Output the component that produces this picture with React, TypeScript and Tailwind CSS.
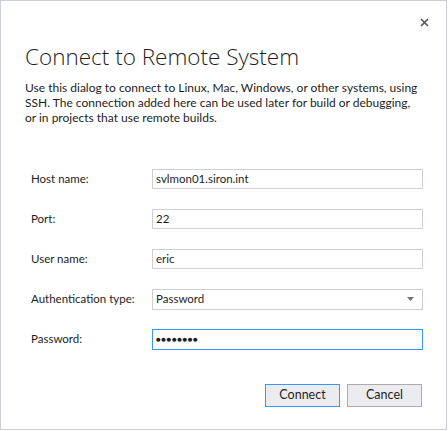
import React from 'react';

const fields = [
  { label: 'Host name:', value: 'svlmon01.siron.int' },
  { label: 'Port:', value: '22' },
  { label: 'User name:', value: 'eric' },
];

export default function App() {
  return (
    <div className="w-[448px] h-[431px] bg-white" style={{ fontFamily: 'Lato, "Noto Sans", sans-serif' }}>
      <div className="relative w-[447px] h-[430px] border border-[#cccedb] bg-white text-[#1e1e1e]">
        {/* Close */}
        <button className="absolute top-[15px] right-[16px] w-[12px] h-[12px] flex items-center justify-center">
          <svg width="9" height="9" viewBox="0 0 9 9">
            <path d="M1 1 L8 8 M8 1 L1 8" stroke="#555" strokeWidth="1.6" />
          </svg>
        </button>

        <div className="pl-[24px] pr-[10px] pt-[41px]">
          <h1 className="text-[22.5px] font-light leading-[30px] whitespace-nowrap" style={{ fontFamily: '"Open Sans", sans-serif' }}>
            Connect to Remote System
          </h1>
          <p className="mt-[8px] text-[12px] leading-[15px] whitespace-nowrap">
            Use this dialog to connect to Linux, Mac, Windows, or other systems, using
            <br />
            SSH. The connection added here can be used later for build or debugging,
            <br />
            or in projects that use remote builds.
          </p>
        </div>

        {/* Form */}
        <div className="mt-[44px] flex flex-col gap-[20px] pl-[30px]">
          {fields.map((f) => (
            <div key={f.label} className="flex items-center h-[20px]">
              <span className="w-[121px] text-[11.5px]">{f.label}</span>
              <div className="w-[271px] h-[20px] border border-[#cccedb] flex items-center px-[3px] text-[11.5px]">
                {f.value}
              </div>
            </div>
          ))}
          <div className="flex items-center h-[20px]">
            <span className="w-[121px] text-[11.5px]">Authentication type:</span>
            <div className="w-[271px] h-[21px] border border-[#cccedb] flex items-center justify-between px-[3px] text-[11.5px]">
              <span>Password</span>
              <svg width="7" height="4" viewBox="0 0 7 4" className="mr-[5px]">
                <path d="M0 0 H7 L3.5 4 Z" fill="#717171" />
              </svg>
            </div>
          </div>
          <div className="flex items-center h-[20px]">
            <span className="w-[121px] text-[11.5px]">Password:</span>
            <div className="w-[271px] h-[21px] border border-[#3399ff] flex items-center px-[3px] text-[8px] font-bold tracking-[0.5px]">
              ●●●●●●●●
            </div>
          </div>
        </div>

        {/* Buttons */}
        <div className="mt-[35px] flex justify-end gap-[7px] pr-[24px]">
          <button className="w-[75px] h-[23px] border border-[#3399ff] bg-[#ececf0] text-[12.5px] flex items-center justify-center">
            Connect
          </button>
          <button className="w-[75px] h-[23px] border border-[#acacac] bg-[#ececf0] text-[12.5px] flex items-center justify-center">
            Cancel
          </button>
        </div>
      </div>
    </div>
  );
}
